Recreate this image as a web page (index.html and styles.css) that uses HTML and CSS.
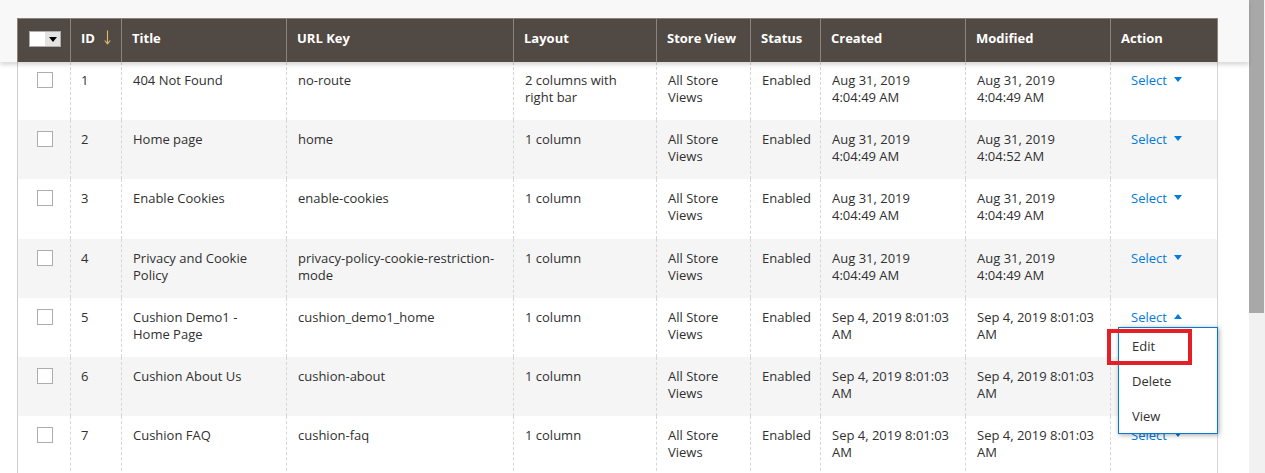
FILE: index.html
```html
<!DOCTYPE html>
<html lang="en">
<head>
  <meta charset="UTF-8" />
  <title>Pages</title>
  <link rel="stylesheet" href="styles.css">
</head>
<body>
  <div class="page">
    <div class="sticky-head">
      <table class="grid">
        <colgroup>
          <col class="c-check"><col class="c-id"><col class="c-title"><col class="c-url"><col class="c-layout">
          <col class="c-store"><col class="c-status"><col class="c-created"><col class="c-modified"><col class="c-action">
        </colgroup>
        <thead>
          <tr>
            <th class="th-check">
              <span class="multi"><span class="multi-box"></span><span class="multi-toggle"></span></span>
            </th>
            <th>ID <svg class="sort" width="7" height="15" viewBox="0 0 7 15"><path d="M3.5 0.5 V13.5 M0.8 10.5 L3.5 13.8 L6.2 10.5" fill="none" stroke="#dcbd6a" stroke-width="1.1"/></svg></th>
            <th>Title</th>
            <th>URL Key</th>
            <th>Layout</th>
            <th>Store View</th>
            <th>Status</th>
            <th>Created</th>
            <th>Modified</th>
            <th>Action</th>
          </tr>
        </thead>
      </table>
    </div>

    <div class="grid-body">
      <table class="grid">
        <colgroup>
          <col class="c-check"><col class="c-id"><col class="c-title"><col class="c-url"><col class="c-layout">
          <col class="c-store"><col class="c-status"><col class="c-created"><col class="c-modified"><col class="c-action">
        </colgroup>
        <tbody>
          <tr>
            <td class="td-check"><span class="check"></span></td>
            <td>1</td><td>404 Not Found</td><td>no-route</td><td>2 columns with right bar</td>
            <td>All Store Views</td><td>Enabled</td><td>Aug 31, 2019 4:04:49 AM</td><td>Aug 31, 2019 4:04:49 AM</td>
            <td><a class="select">Select <span class="caret"></span></a></td>
          </tr>
          <tr>
            <td class="td-check"><span class="check"></span></td>
            <td>2</td><td>Home page</td><td>home</td><td>1 column</td>
            <td>All Store Views</td><td>Enabled</td><td>Aug 31, 2019 4:04:49 AM</td><td>Aug 31, 2019 4:04:52 AM</td>
            <td><a class="select">Select <span class="caret"></span></a></td>
          </tr>
          <tr>
            <td class="td-check"><span class="check"></span></td>
            <td>3</td><td>Enable Cookies</td><td>enable-cookies</td><td>1 column</td>
            <td>All Store Views</td><td>Enabled</td><td>Aug 31, 2019 4:04:49 AM</td><td>Aug 31, 2019 4:04:49 AM</td>
            <td><a class="select">Select <span class="caret"></span></a></td>
          </tr>
          <tr>
            <td class="td-check"><span class="check"></span></td>
            <td>4</td><td>Privacy and Cookie Policy</td><td>privacy-policy-cookie-restriction-mode</td><td>1 column</td>
            <td>All Store Views</td><td>Enabled</td><td>Aug 31, 2019 4:04:49 AM</td><td>Aug 31, 2019 4:04:49 AM</td>
            <td><a class="select">Select <span class="caret"></span></a></td>
          </tr>
          <tr>
            <td class="td-check"><span class="check"></span></td>
            <td>5</td><td>Cushion Demo1 - Home Page</td><td>cushion_demo1_home</td><td>1 column</td>
            <td>All Store Views</td><td>Enabled</td><td>Sep 4, 2019 8:01:03 AM</td><td>Sep 4, 2019 8:01:03 AM</td>
            <td class="td-action">
              <a class="select">Select <span class="caret up"></span></a>
              <ul class="action-menu">
                <li>Edit</li>
                <li>Delete</li>
                <li>View</li>
              </ul>
              <span class="highlight"></span>
            </td>
          </tr>
          <tr>
            <td class="td-check"><span class="check"></span></td>
            <td>6</td><td>Cushion About Us</td><td>cushion-about</td><td>1 column</td>
            <td>All Store Views</td><td>Enabled</td><td>Sep 4, 2019 8:01:03 AM</td><td>Sep 4, 2019 8:01:03 AM</td>
            <td><a class="select">Select <span class="caret"></span></a></td>
          </tr>
          <tr>
            <td class="td-check"><span class="check"></span></td>
            <td>7</td><td>Cushion FAQ</td><td>cushion-faq</td><td>1 column</td>
            <td>All Store Views</td><td>Enabled</td><td>Sep 4, 2019 8:01:03 AM</td><td>Sep 4, 2019 8:01:03 AM</td>
            <td><a class="select">Select <span class="caret"></span></a></td>
          </tr>
        </tbody>
      </table>
    </div>
  </div>

  <div class="scrollbar"><div class="thumb"></div></div>
</body>
</html>
```

FILE: styles.css
```css
html, body {
  margin: 0;
  padding: 0;
  height: 473px;
  overflow: hidden;
}
body {
  display: flex;
  font-family: 'Open Sans', sans-serif;
  font-size: 13px;
  color: #303030;
  background: #fff;
}
.page {
  flex: 1;
  min-width: 0;
}
.sticky-head {
  position: relative;
  z-index: 2;
  background: #f8f8f8;
  padding: 18px 0 0 17px;
  box-shadow: 0 3px 4px rgba(0,0,0,0.15);
}
.grid-body {
  padding-left: 17px;
}
.grid {
  border-collapse: collapse;
  table-layout: fixed;
  width: 1200px;
}
.c-check { width: 53px; }
.c-id { width: 51px; }
.c-title { width: 165px; }
.c-url { width: 227px; }
.c-layout { width: 143px; }
.c-store { width: 94px; }
.c-status { width: 70px; }
.c-created { width: 145px; }
.c-modified { width: 145px; }
.c-action { width: 107px; }

.grid th {
  background: #514943;
  color: #fff;
  font-weight: bold;
  text-align: left;
  height: 38px;
  padding: 0 10px 5px;
  border: 1px solid #8a837f;
  border-bottom: none;
  white-space: nowrap;
}
.th-check {
  text-align: center;
}
.multi {
  display: inline-flex;
  vertical-align: middle;
  border: 1px solid #adadad;
  margin-left: 1px;
}
.multi-box {
  width: 15px;
  height: 14px;
  background: #fff;
}
.multi-toggle {
  width: 15px;
  height: 14px;
  background: #e3e3e3;
  position: relative;
}
.multi-toggle::after {
  content: "";
  position: absolute;
  left: 4px;
  top: 5px;
  border-left: 4px solid transparent;
  border-right: 4px solid transparent;
  border-top: 5px solid #000;
}
.sort {
  vertical-align: -2px;
  margin-left: 6px;
}

.grid td {
  vertical-align: top;
  padding: 11px 10px 14.3px 11px;
  line-height: 17px;
  height: 34px;
  border-left: 1px dashed #d6d6d6;
  border-right: 1px dashed #d6d6d6;
}
.grid td:first-child {
  border-left: 1px solid #cfcfcf;
}
.grid td:last-child {
  border-right: 1px solid #d6d6d6;
}
.grid tbody tr:nth-child(even) td {
  background: #f5f5f5;
}
.grid tbody tr:first-child td {
  padding-top: 10px;
  padding-bottom: 14px;
}
.grid tbody td:nth-child(2) {
  padding-left: 10px;
}
.td-check {
  text-align: center;
}
.check {
  display: inline-block;
  width: 14px;
  height: 14px;
  border: 1px solid #adadad;
  background: #fff;
  margin-left: 1px;
}

.select {
  color: #007bdb;
  padding-left: 9px;
  white-space: nowrap;
}
.caret {
  display: inline-block;
  vertical-align: 3px;
  margin-left: 4px;
  border-left: 4px solid transparent;
  border-right: 4px solid transparent;
  border-top: 5px solid #007bdb;
}
.caret.up {
  border-top: none;
  border-bottom: 5px solid #007bdb;
}

.td-action {
  position: relative;
}
.action-menu {
  position: absolute;
  left: 7px;
  top: 29px;
  width: 98px;
  margin: 0;
  padding: 0;
  list-style: none;
  background: #fff;
  border: 1px solid #007bdb;
  box-shadow: 1px 1px 5px rgba(0,0,0,0.35);
  z-index: 3;
}
.action-menu li {
  padding: 0 13px;
  height: 35px;
  line-height: 37px;
  color: #303030;
}
.highlight {
  position: absolute;
  left: -4px;
  top: 31px;
  width: 77px;
  height: 28px;
  border: 4px solid #e41f26;
  z-index: 4;
}

.scrollbar {
  width: 16px;
  flex: none;
  background: #f1f1f1;
}
.thumb {
  width: 15px;
  height: 313px;
  background: #a8a8a8;
}
```
